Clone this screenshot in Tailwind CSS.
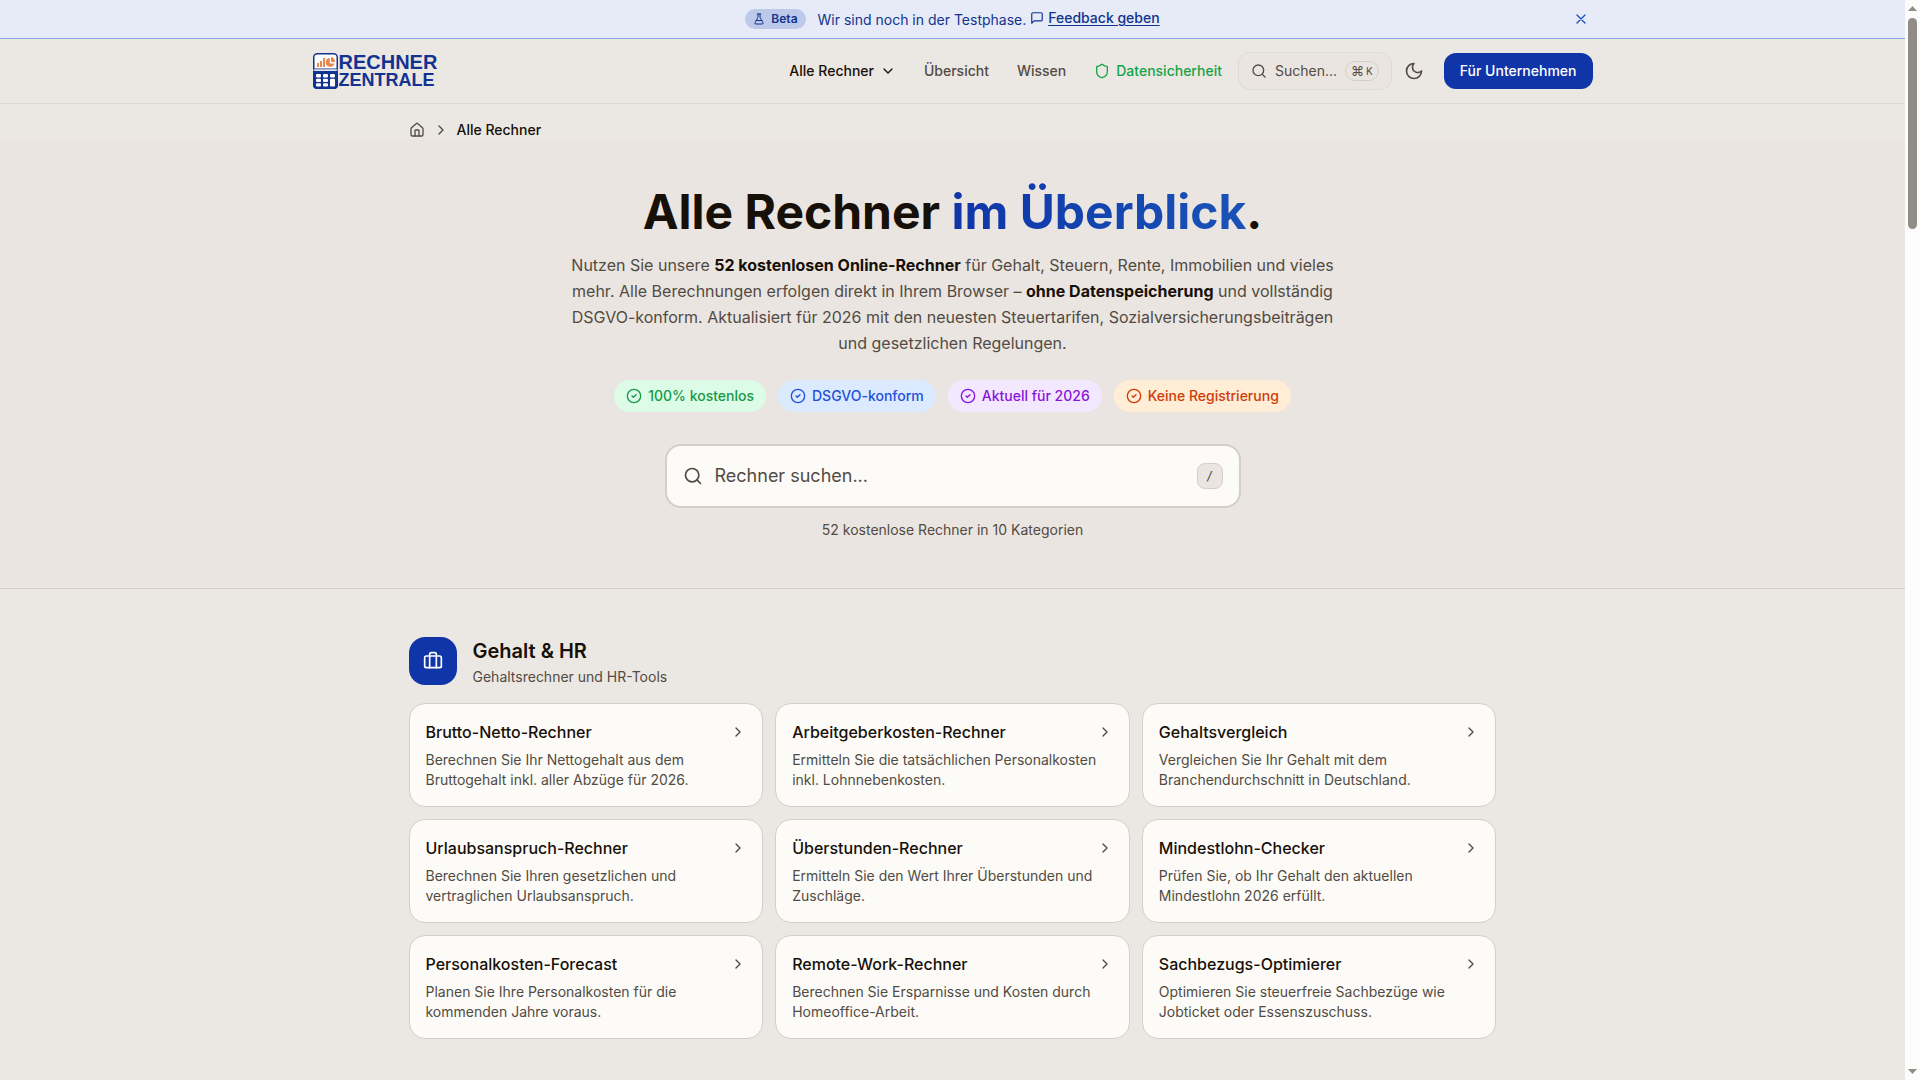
<!DOCTYPE html>
<html lang="de">
<head>
    <meta charset="UTF-8">
    <meta name="viewport" content="width=device-width, initial-scale=1.0">
    <title>Alle Rechner – Rechner Zentrale</title>
    <script src="https://cdn.jsdelivr.net/npm/@tailwindcss/browser@4"></script>
</head>
<body class="flex h-screen overflow-hidden bg-[#ebe8e3] font-['Inter',sans-serif] text-[#171008]">
    <!-- Icons -->
    <svg class="hidden">
        <symbol id="chevron" viewBox="0 0 24 24"><path d="m9 18 6-6-6-6"/></symbol>
        <symbol id="search" viewBox="0 0 24 24"><circle cx="11" cy="11" r="8"/><path d="m21 21-4.3-4.3"/></symbol>
        <symbol id="check" viewBox="0 0 24 24"><circle cx="12" cy="12" r="10"/><path d="m9 12 2 2 4-4"/></symbol>
    </svg>

    <div class="min-w-0 flex-1">
        <!-- Beta-Hinweis -->
        <div class="border-b border-[#87a5e0] bg-[#e6ebf7] text-sm text-[#12338f]">
            <div class="mx-auto flex max-w-[1280px] items-center py-2">
                <div class="flex flex-1 items-center justify-center gap-3 pl-6">
                    <span class="flex items-center gap-1.5 rounded-full bg-[#bdc9e8] px-2 py-0.5 text-xs font-semibold">
                        <svg class="size-3 fill-none stroke-current stroke-2" viewBox="0 0 24 24" stroke-linecap="round" stroke-linejoin="round"><path d="M14 2v6a2 2 0 0 0 .245.96l5.51 10.08A2 2 0 0 1 18 22H6a2 2 0 0 1-1.755-2.96l5.51-10.08A2 2 0 0 0 10 8V2"/><path d="M6.453 15h11.094M8.5 2h7"/></svg>
                        Beta
                    </span>
                    <p>Wir sind noch in der Testphase.
                        <a href="#" class="inline-flex items-center gap-1 font-medium underline underline-offset-2"><svg class="size-3.5 fill-none stroke-current stroke-2" viewBox="0 0 24 24" stroke-linecap="round" stroke-linejoin="round"><path d="M21 15a2 2 0 0 1-2 2H7l-4 4V5a2 2 0 0 1 2-2h14a2 2 0 0 1 2 2z"/></svg>Feedback geben</a>
                    </p>
                </div>
                <button class="flex h-5 w-6 items-center justify-center" aria-label="Hinweis schließen">
                    <svg class="size-4 fill-none stroke-[#1d4fb8] stroke-2" viewBox="0 0 24 24" stroke-linecap="round"><path d="M18 6 6 18M6 6l12 12"/></svg>
                </button>
            </div>
        </div>

        <!-- Kopfzeile -->
        <header class="border-b border-[#dedad6]">
            <div class="mx-auto flex h-16 max-w-[1280px] items-center justify-between">
                <a href="#" aria-label="Rechner Zentrale" class="flex items-center gap-px">
                    <svg class="h-9 w-[25px]" viewBox="0 0 25 36">
                        <rect x="0.75" y="0.75" width="23.5" height="34.5" rx="3.5" fill="#fff" stroke="#12338f" stroke-width="1.5"/>
                        <path d="M0 18h25v14a4 4 0 0 1-4 4H4a4 4 0 0 1-4-4z" fill="#12338f"/>
                        <path d="M1 15.500h23v1H1z" fill="#12338f"/>
                        <path d="M0 16.500h25v1H0z" fill="#c9d0e2"/>
                        <path d="M4 10h2v4H4zM7 8h2v6H7zM10 5h2v9h-2z" fill="#e8894b"/>
                        <path d="M16.800 5a4.400 4.400 0 1 0 4.600 5.400h-4.600zM18 4v5h4a4.500 4.500 0 0 0-4-5z" fill="#e8894b"/>
                        <g fill="#fff">
                            <rect x="3" y="21" width="5" height="3.500" rx="1"/><rect x="10" y="21" width="5" height="3.500" rx="1"/><rect x="17" y="21" width="5" height="3.500" rx="1"/>
                            <rect x="3" y="25.700" width="5" height="3.300" rx="1"/><rect x="10" y="25.700" width="5" height="3.300" rx="1"/><rect x="17" y="25.700" width="5" height="7.800" rx="1"/>
                            <rect x="3" y="30.200" width="5" height="3.300" rx="1"/><rect x="10" y="30.200" width="5" height="3.300" rx="1"/>
                        </g>
                    </svg>
                    <span class="flex flex-col font-['Liberation_Sans',sans-serif] leading-[18px] font-bold text-[#12338f]"><span class="text-[20px]">RECHNER</span><span class="text-[18px]">ZENTRALE</span></span>
                </a>

                <nav class="flex items-center gap-1 text-sm font-medium text-[#524b43]">
                    <button class="flex items-center gap-1.5 px-3 py-2 text-[#171008]">
                        Alle Rechner
                        <svg class="size-4 fill-none stroke-current stroke-2" viewBox="0 0 24 24" stroke-linecap="round" stroke-linejoin="round"><path d="m6 9 6 6 6-6"/></svg>
                    </button>
                    <a href="#" class="px-3 py-2">Übersicht</a>
                    <a href="#" class="px-3 py-2">Wissen</a>
                    <a href="#" class="flex items-center gap-1.5 px-3 py-2 text-[#16a34a]">
                        <svg class="size-4 fill-none stroke-current stroke-2" viewBox="0 0 24 24" stroke-linecap="round" stroke-linejoin="round"><path d="M20 13c0 5-3.500 7.500-7.660 8.950a1 1 0 0 1-.67-.01C7.500 20.500 4 18 4 13V6a1 1 0 0 1 1-1c2 0 4.500-1.200 6.240-2.720a1.170 1.170 0 0 1 1.520 0C14.510 3.810 17 5 19 5a1 1 0 0 1 1 1z"/></svg>
                        Datensicherheit
                    </a>
                    <button class="flex h-[38px] items-center gap-2 rounded-xl border border-[#dedad6] bg-[#eae5e1] px-3 font-normal">
                        <svg class="size-4 fill-none stroke-current stroke-2" stroke-linecap="round"><use href="#search"/></svg>
                        Suchen...
                        <kbd class="flex h-5 items-center gap-0.5 rounded-full border border-[#d3ceca] px-[5px] font-['Inter',sans-serif] text-[10px]"><span class="text-[13px]">⌘</span>K</kbd>
                    </button>
                    <button class="flex size-9 items-center justify-center" aria-label="Dunkles Design">
                        <svg class="size-5 fill-none stroke-current stroke-2" viewBox="0 0 24 24" stroke-linecap="round" stroke-linejoin="round"><path d="M12 3a6 6 0 0 0 9 9 9 9 0 1 1-9-9Z"/></svg>
                    </button>
                    <a href="#" class="ml-2 rounded-xl bg-[#1035a8] px-4 py-2 text-white">Für Unternehmen</a>
                </nav>
            </div>
        </header>

        <!-- Brotkrumen -->
        <nav aria-label="Brotkrumen" class="mx-auto flex max-w-[1088px] items-center gap-2 pt-4 text-sm text-[#524b43]">
            <a href="#" aria-label="Startseite"><svg class="size-4 fill-none stroke-current stroke-2" viewBox="0 0 24 24" stroke-linecap="round" stroke-linejoin="round"><path d="M15 21v-8a1 1 0 0 0-1-1h-4a1 1 0 0 0-1 1v8"/><path d="M3 10a2 2 0 0 1 .709-1.528l7-5.999a2 2 0 0 1 2.582 0l7 5.999A2 2 0 0 1 21 10v9a2 2 0 0 1-2 2H5a2 2 0 0 1-2-2z"/></svg></a>
            <svg class="size-4 fill-none stroke-current stroke-2" stroke-linecap="round" stroke-linejoin="round"><use href="#chevron"/></svg>
            <span class="font-medium text-[#171008]">Alle Rechner</span>
        </nav>

        <!-- Hero -->
        <section class="border-b border-[#d3ceca] bg-[#eae5e1] pt-10 pb-12 text-center">
            <h1 class="text-5xl leading-[64px] font-bold">Alle Rechner <span class="bg-linear-to-r from-[#1035a8] to-[#1a53b8] bg-clip-text text-transparent">im Überblick</span>.</h1>
            <p class="mx-auto mt-2 max-w-3xl leading-[26px] text-[#524b43]">
                Nutzen Sie unsere <strong class="font-bold text-[#171008]">52 kostenlosen Online-Rechner</strong> für Gehalt, Steuern, Rente, Immobilien und vieles mehr. Alle Berechnungen erfolgen direkt in Ihrem Browser – <strong class="font-bold text-[#171008]">ohne Datenspeicherung</strong> und vollständig DSGVO-konform. Aktualisiert für 2026 mit den neuesten Steuertarifen, Sozialversicherungsbeiträgen und gesetzlichen Regelungen.
            </p>
            <ul class="mt-6 flex justify-center gap-3 text-sm font-medium">
                <li class="flex items-center gap-1.5 rounded-full bg-[#dcfce7] px-3 py-1.5 text-[#169a48]"><svg class="size-4 fill-none stroke-current stroke-2" stroke-linecap="round" stroke-linejoin="round"><use href="#check"/></svg>100% kostenlos</li>
                <li class="flex items-center gap-1.5 rounded-full bg-[#dbeafe] px-3 py-1.5 text-[#2350dc]"><svg class="size-4 fill-none stroke-current stroke-2" stroke-linecap="round" stroke-linejoin="round"><use href="#check"/></svg>DSGVO-konform</li>
                <li class="flex items-center gap-1.5 rounded-full bg-[#f3e8ff] px-3 py-1.5 text-[#8a14dc]"><svg class="size-4 fill-none stroke-current stroke-2" stroke-linecap="round" stroke-linejoin="round"><use href="#check"/></svg>Aktuell für 2026</li>
                <li class="flex items-center gap-1.5 rounded-full bg-[#ffedd5] px-3 py-1.5 text-[#cf3c0a]"><svg class="size-4 fill-none stroke-current stroke-2" stroke-linecap="round" stroke-linejoin="round"><use href="#check"/></svg>Keine Registrierung</li>
            </ul>
            <div class="mx-auto mt-8 flex h-16 max-w-xl items-center gap-3 rounded-2xl border-2 border-[#d3ceca] bg-[#fcfbf8] px-4">
                <svg class="size-5 fill-none stroke-[#524b43] stroke-2" stroke-linecap="round"><use href="#search"/></svg>
                <input type="search" aria-label="Rechner suchen" placeholder="Rechner suchen..." class="min-w-0 flex-1 text-lg outline-none placeholder:text-[#524b43]">
                <kbd class="flex size-[26px] items-center justify-center rounded-lg border border-[#d3ceca] bg-[#eae5e1] font-['DejaVu_Sans_Mono',monospace] text-xs text-[#524b43]">/</kbd>
            </div>
            <p class="mt-3 text-sm text-[#524b43]">52 kostenlose Rechner in 10 Kategorien</p>
        </section>

        <!-- Kategorie -->
        <main class="mx-auto max-w-[1088px] pt-12">
            <div class="flex items-start gap-4">
                <div class="flex size-12 items-center justify-center rounded-2xl bg-[#1035a8]">
                    <svg class="size-5 fill-none stroke-white stroke-2" viewBox="0 0 24 24" stroke-linecap="round" stroke-linejoin="round"><path d="M16 20V4a2 2 0 0 0-2-2h-4a2 2 0 0 0-2 2v16"/><rect width="20" height="14" x="2" y="6" rx="2"/></svg>
                </div>
                <div>
                    <h2 class="text-xl font-semibold">Gehalt &amp; HR</h2>
                    <p class="mt-0.5 text-sm text-[#524b43]">Gehaltsrechner und HR-Tools</p>
                </div>
            </div>
            <div id="rechner" class="mt-4 grid grid-cols-3 gap-3"></div>
        </main>
    </div>

    <!-- Bildlaufleiste -->
    <div class="flex w-[15px] flex-col items-center bg-[#fcfcfc] py-1.5" aria-hidden="true">
        <svg class="h-[5px] w-[9px] fill-[#918d86]" viewBox="0 0 9 5"><path d="M4.500 0 9 5H0z"/></svg>
        <div class="mt-[7px] h-[211px] w-[9px] rounded-full bg-[#918d86]"></div>
        <svg class="mt-auto h-[5px] w-[9px] fill-[#918d86]" viewBox="0 0 9 5"><path d="M4.500 5 0 0h9z"/></svg>
    </div>

    <script>
        const rechner = [
            { name: "Brutto-Netto-Rechner", text: "Berechnen Sie Ihr Nettogehalt aus dem Bruttogehalt inkl. aller Abzüge für 2026." },
            { name: "Arbeitgeberkosten-Rechner", text: "Ermitteln Sie die tatsächlichen Personalkosten inkl. Lohnnebenkosten." },
            { name: "Gehaltsvergleich", text: "Vergleichen Sie Ihr Gehalt mit dem Branchendurchschnitt in Deutschland." },
            { name: "Urlaubsanspruch-Rechner", text: "Berechnen Sie Ihren gesetzlichen und vertraglichen Urlaubsanspruch." },
            { name: "Überstunden-Rechner", text: "Ermitteln Sie den Wert Ihrer Überstunden und Zuschläge." },
            { name: "Mindestlohn-Checker", text: "Prüfen Sie, ob Ihr Gehalt den aktuellen Mindestlohn 2026 erfüllt." },
            { name: "Personalkosten-Forecast", text: "Planen Sie Ihre Personalkosten für die kommenden Jahre voraus." },
            { name: "Remote-Work-Rechner", text: "Berechnen Sie Ersparnisse und Kosten durch Homeoffice-Arbeit." },
            { name: "Sachbezugs-Optimierer", text: "Optimieren Sie steuerfreie Sachbezüge wie Jobticket oder Essenszuschuss." }
        ];

        document.getElementById('rechner').innerHTML = rechner.map(r => `
            <a href="#" class="rounded-2xl border border-[#d3ceca] bg-[#fcfbf8] p-4">
                <div class="flex items-center justify-between">
                    <h3 class="font-medium">${r.name}</h3>
                    <svg class="size-4 fill-none stroke-[#524b43] stroke-2" stroke-linecap="round" stroke-linejoin="round"><use href="#chevron"/></svg>
                </div>
                <p class="mt-1.5 text-sm text-[#524b43]">${r.text}</p>
            </a>
        `).join('');
    </script>
</body>
</html>
